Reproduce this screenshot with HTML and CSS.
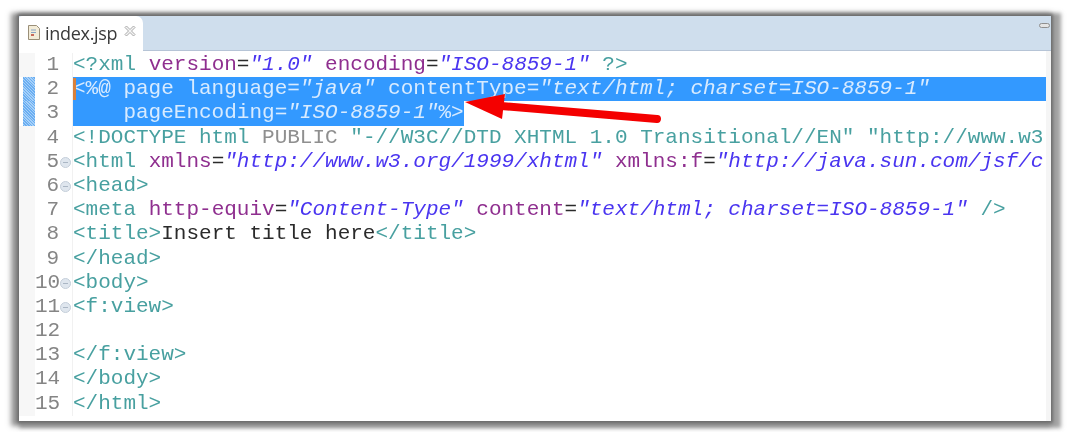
FILE: index.html
```html
<!DOCTYPE html>
<html lang="en">
<head>
<meta charset="utf-8">
<title>index.jsp</title>
<link rel="stylesheet" href="styles.css">
</head>
<body>
<div class="window">
  <div class="tabbar">
    <div class="tab">
      <svg class="file-icon" width="12" height="15" viewBox="0 0 12 15"><path d="M.5.5h8l3 3v11H.5z" fill="#f3ecd8" stroke="#9a8f78"/><path d="M3 5h5M3 7.500h5" stroke="#8aa6c4"/><path d="M3 10h3" stroke="#c86a5a" stroke-width="2"/></svg>
      <span class="tab-name">index.jsp</span>
      <svg class="close-icon" width="12" height="12" viewBox="0 0 12 12"><path d="M1 2.500 2.500 1 6 4.500 9.500 1 11 2.500 7.500 6 11 9.500 9.500 11 6 7.500 2.500 11 1 9.500 4.500 6z" fill="#f4f4f4" stroke="#a9a9a9"/></svg>
    </div>
    <span class="minimize"></span>
  </div>
  <div class="editor">
    <div class="line"><span class="ruler"></span><span class="num">1</span><span class="fold"></span><code class="code"><i class="t">&lt;?xml</i> <b class="a">version</b>=<em class="v">"1.0"</em> <b class="a">encoding</b>=<em class="v">"ISO-8859-1"</em> <i class="t">?&gt;</i></code></div>
    <div class="line"><span class="ruler mark"></span><span class="num">2</span><span class="fold"></span><code class="code sel full"><span class="caret"></span>&lt;%@ page language=<em>"java"</em> contentType=<em>"text/html; charset=ISO-8859-1"</em></code></div>
    <div class="line"><span class="ruler mark"></span><span class="num">3</span><span class="fold"></span><code class="code sel">    pageEncoding=<em>"ISO-8859-1"</em>%&gt;</code></div>
    <div class="line"><span class="ruler"></span><span class="num">4</span><span class="fold"></span><code class="code"><i class="t">&lt;!DOCTYPE html</i> <span class="g">PUBLIC</span> <i class="t">"-//W3C//DTD XHTML 1.0 Transitional//EN" "http://www.w3</i></code></div>
    <div class="line"><span class="ruler"></span><span class="num">5</span><span class="fold on"></span><code class="code"><i class="t">&lt;html</i> <b class="a">xmlns</b>=<em class="v">"http://www.w3.org/1999/xhtml"</em> <b class="a">xmlns:f</b>=<em class="v">"http://java.sun.com/jsf/c</em></code></div>
    <div class="line"><span class="ruler"></span><span class="num">6</span><span class="fold on"></span><code class="code"><i class="t">&lt;head&gt;</i></code></div>
    <div class="line"><span class="ruler"></span><span class="num">7</span><span class="fold"></span><code class="code"><i class="t">&lt;meta</i> <b class="a">http-equiv</b>=<em class="v">"Content-Type"</em> <b class="a">content</b>=<em class="v">"text/html; charset=ISO-8859-1"</em> <i class="t">/&gt;</i></code></div>
    <div class="line"><span class="ruler"></span><span class="num">8</span><span class="fold"></span><code class="code"><i class="t">&lt;title&gt;</i>Insert title here<i class="t">&lt;/title&gt;</i></code></div>
    <div class="line"><span class="ruler"></span><span class="num">9</span><span class="fold"></span><code class="code"><i class="t">&lt;/head&gt;</i></code></div>
    <div class="line"><span class="ruler"></span><span class="num">10</span><span class="fold on"></span><code class="code"><i class="t">&lt;body&gt;</i></code></div>
    <div class="line"><span class="ruler"></span><span class="num">11</span><span class="fold on"></span><code class="code"><i class="t">&lt;f:view&gt;</i></code></div>
    <div class="line"><span class="ruler"></span><span class="num">12</span><span class="fold"></span><code class="code"></code></div>
    <div class="line"><span class="ruler"></span><span class="num">13</span><span class="fold"></span><code class="code"><i class="t">&lt;/f:view&gt;</i></code></div>
    <div class="line"><span class="ruler"></span><span class="num">14</span><span class="fold"></span><code class="code"><i class="t">&lt;/body&gt;</i></code></div>
    <div class="line"><span class="ruler"></span><span class="num">15</span><span class="fold"></span><code class="code"><i class="t">&lt;/html&gt;</i></code></div>
  </div>
  <svg class="arrow" width="210" height="34" viewBox="0 0 210 34"><path d="M0 8 40 0 37 25z" fill="#f40000"/><path d="M36 12 192 25" stroke="#f40000" stroke-width="8" stroke-linecap="round"/></svg>
</div>
</body>
</html>
```

FILE: styles.css
```css
* { box-sizing: border-box; }
html, body { margin: 0; height: 100%; background: #fff; overflow: hidden; }
body { padding: 16px 17px 0 19px; }

.window {
  position: relative;
  width: 1032px;
  height: 405px;
  background: #fff;
  display: flex;
  flex-direction: column;
  box-shadow: 0 0 3px 2px rgba(90, 90, 90, .7), 5px 2px 4px 5px rgba(140, 140, 140, .8), -4px 1px 5px 4px rgba(125, 125, 125, .8);
}

.tabbar {
  height: 35px;
  flex: none;
  background: #cfdeed;
  border-bottom: 1px solid #b6c4d6;
  display: flex;
  align-items: flex-start;
  justify-content: space-between;
}
.tab {
  width: 124px;
  height: 35px;
  background: #fff;
  border-radius: 3px 7px 0 0;
  display: flex;
  align-items: center;
  padding: 0 0 2px 9px;
  filter: blur(.4px);
}
.file-icon { flex: none; }
.tab-name {
  font: 18px "Open Sans", "Liberation Sans", sans-serif;
  color: #3a3a3a;
  margin-left: 5px;
  letter-spacing: -.3px;
}
.close-icon { flex: none; margin: -4px 0 0 7px; }
.minimize {
  width: 11px;
  height: 5px;
  margin: 7px 1px 0 0;
  background: #e4e4e4;
  border: 1px solid #8f8f8f;
  border-radius: 3px;
}

.editor {
  flex: 1;
  padding-top: 2px;
  overflow: hidden;
  border-right: 5px solid #f5f5f5;
}
.line {
  height: 24.200px;
  display: flex;
  align-items: stretch;
  font-size: 21px;
  line-height: 24px;
  white-space: pre;
  filter: blur(.5px);
}
.ruler { width: 16px; flex: none; background: #f7f7f7; }
.ruler.mark {
  background: repeating-linear-gradient(45deg, #6aaef2 0 1px, #a6d0f8 1px 2px);
  border-left: 4px solid #fff;
}
.num {
  width: 24px;
  flex: none;
  text-align: right;
  font: 21px/24px "Liberation Mono", monospace;
  color: #858585;
}
.fold {
  width: 14px;
  flex: none;
  border-right: 1px solid #f1f1f1;
  position: relative;
}
.fold.on::after {
  content: "";
  position: absolute;
  left: 1px;
  top: 7px;
  width: 9px;
  height: 9px;
  border-radius: 50%;
  background: linear-gradient(#aab6c4, #aab6c4) center / 5px 1px no-repeat, #dfe6ee;
  border: 1px solid #c4ced9;
}
.code {
  font: 21px/24px "Liberation Mono", "Courier New", monospace;
  color: #2a2a2a;
  flex: 0 1 auto;
  min-width: 0;
}
.code em { font-style: italic; }
.code i { font-style: normal; }
.code b { font-weight: normal; }
.t { color: #48a0a0; }
.a { color: #8f2f8f; }
.v { color: #4a35f0; }
.g { color: #8f8f8f; }
.code.sel {
  background: #3399ff;
  color: #d8ebff;
  position: relative;
}
.code.sel.full { flex: 1; }
.caret {
  position: absolute;
  left: 0;
  top: 1px;
  width: 3px;
  height: 22px;
  background: #d9803a;
}
.arrow {
  position: absolute;
  left: 446px;
  top: 78px;
}
```
